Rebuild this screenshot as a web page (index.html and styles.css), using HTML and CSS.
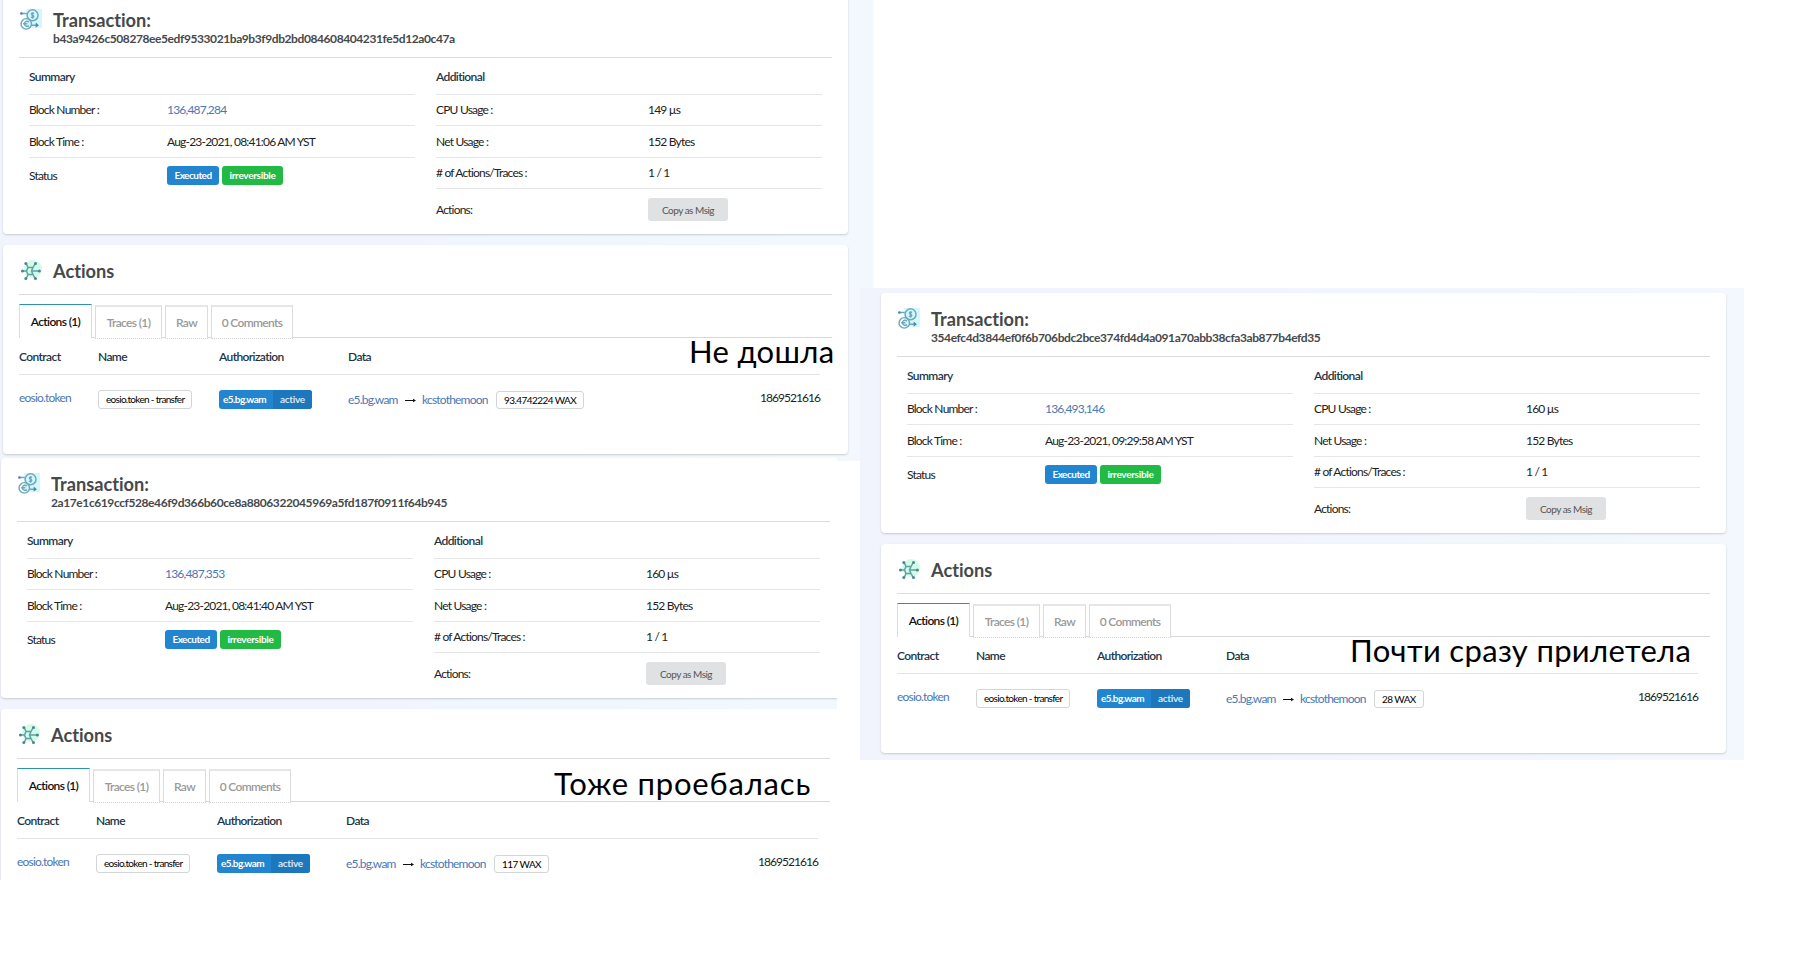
FILE: index.html
```
<!DOCTYPE html>
<html>
<head>
    <meta charset="utf-8">
    <title>Transactions</title>
    <link rel="stylesheet" href="styles.css">
</head>
<body>
    <svg class="defs">
      <symbol id="icon-transaction" viewBox="0 0 21 21">
        <rect x="6" y="0" width="15" height="18" fill="#d3f7fa"/>
        <g fill="none" stroke="#6fa8bd" stroke-width="1.4">
          <circle cx="12" cy="6" r="5.2"/>
          <circle cx="6" cy="14.2" r="5"/>
          <path d="M1 4.3h5.500M11 15.500h5.500M13.500 4.200c-2.600-1-3.400 1-1.500 1.800s1.200 2.800-1.600 1.700M12 3v6.200M8.500 12.200c-3-1.500-4.600.6-4.300 2.300s2.500 2.700 4.300 1.300M3 14h4"/>
        </g>
        <circle cx="1.300" cy="4.300" r="1.300" fill="#4d88a5"/>
        <path d="M15 13l3 2.500-3 2.500z" fill="#4d88a5"/>
      </symbol>
      <symbol id="icon-actions" viewBox="0 0 22 22">
        <circle cx="13" cy="9" r="9" fill="#d2fbe6"/>
        <g fill="none" stroke="#5f9fa6" stroke-width="1.500">
          <path d="M8 7.500h5M13 14.500H8L6.500 11 8 7.500M13 7.500l-1.500 3.500 1.500 3.500M1.500 11h5M11.500 11h9M8 7.500L6 3M13 7.500L15.500 3M8 14.500L6 19M13 14.500l2.500 4.500"/>
        </g>
        <g fill="#4a8698">
          <circle cx="2.500" cy="11" r="1.500"/><circle cx="19.300" cy="11" r="1.500"/>
          <circle cx="5.800" cy="3.500" r="1.500"/><circle cx="15.500" cy="3.500" r="1.500"/>
          <circle cx="5.800" cy="18.500" r="1.500"/><circle cx="15.500" cy="18.500" r="1.500"/>
        </g>
      </symbol>
      <symbol id="icon-arrow" viewBox="0 0 11 7">
        <path d="M0 3.500h9" stroke="#111" stroke-width="1"/>
        <path d="M8 1.800L11 3.500 8 5.200z" fill="#111"/>
      </symbol>
    </svg>

    <div class="shot shot-first">
      <div class="card transaction">
        <div class="card-header">
          <svg class="icon"><use href="#icon-transaction"/></svg>
          <div>
            <h3>Transaction:</h3>
            <div class="hash">b43a9426c508278ee5edf9533021ba9b3f9db2bd084608404231fe5d12a0c47a</div>
          </div>
        </div>
        <div class="details">
          <div class="summary">
            <div class="row head">Summary</div>
            <div class="row"><span>Block Number :</span><a>136,487,284</a></div>
            <div class="row tall"><span>Block Time :</span><span>Aug-23-2021, 08:41:06 AM YST</span></div>
            <div class="row status"><span>Status</span><div class="labels"><b class="label blue">Executed</b><b class="label green">irreversible</b></div></div>
          </div>
          <div class="additional">
            <div class="row head">Additional</div>
            <div class="row"><span>CPU Usage :</span><span>149 µs</span></div>
            <div class="row tall"><span>Net Usage :</span><span>152 Bytes</span></div>
            <div class="row"><span># of Actions/Traces :</span><span>1 / 1</span></div>
            <div class="row last"><span>Actions:</span><button>Copy as Msig</button></div>
          </div>
        </div>
      </div>
      <div class="card actions">
        <div class="card-header">
          <svg class="icon"><use href="#icon-actions"/></svg>
          <h3>Actions</h3>
        </div>
        <div class="tabs">
          <div class="tab active">Actions (1)</div>
          <div class="tab traces">Traces (1)</div>
          <div class="tab raw">Raw</div>
          <div class="tab comments">0 Comments</div>
        </div>
        <div class="grid grid-head"><span>Contract</span><span>Name</span><span>Authorization</span><span>Data</span></div>
        <div class="grid grid-row">
          <a>eosio.token</a>
          <div><span class="name">eosio.token - transfer</span></div>
          <div class="auth"><b>e5.bg.wam</b><b class="perm">active</b></div>
          <div class="data"><a class="from">e5.bg.wam</a><svg class="arrow"><use href="#icon-arrow"/></svg><a class="to">kcstothemoon</a><span class="amount">93.4742224 WAX</span></div>
          <span class="memo">1869521616</span>
        </div>
      </div>
      <div class="note">Не дошла</div>
    </div>

    <div class="shot shot-second">
      <div class="card transaction">
        <div class="card-header">
          <svg class="icon"><use href="#icon-transaction"/></svg>
          <div>
            <h3>Transaction:</h3>
            <div class="hash">2a17e1c619ccf528e46f9d366b60ce8a8806322045969a5fd187f0911f64b945</div>
          </div>
        </div>
        <div class="details">
          <div class="summary">
            <div class="row head">Summary</div>
            <div class="row"><span>Block Number :</span><a>136,487,353</a></div>
            <div class="row tall"><span>Block Time :</span><span>Aug-23-2021, 08:41:40 AM YST</span></div>
            <div class="row status"><span>Status</span><div class="labels"><b class="label blue">Executed</b><b class="label green">irreversible</b></div></div>
          </div>
          <div class="additional">
            <div class="row head">Additional</div>
            <div class="row"><span>CPU Usage :</span><span>160 µs</span></div>
            <div class="row tall"><span>Net Usage :</span><span>152 Bytes</span></div>
            <div class="row"><span># of Actions/Traces :</span><span>1 / 1</span></div>
            <div class="row last"><span>Actions:</span><button>Copy as Msig</button></div>
          </div>
        </div>
      </div>
      <div class="card actions">
        <div class="card-header">
          <svg class="icon"><use href="#icon-actions"/></svg>
          <h3>Actions</h3>
        </div>
        <div class="tabs">
          <div class="tab active">Actions (1)</div>
          <div class="tab traces">Traces (1)</div>
          <div class="tab raw">Raw</div>
          <div class="tab comments">0 Comments</div>
        </div>
        <div class="grid grid-head"><span>Contract</span><span>Name</span><span>Authorization</span><span>Data</span></div>
        <div class="grid grid-row">
          <a>eosio.token</a>
          <div><span class="name">eosio.token - transfer</span></div>
          <div class="auth"><b>e5.bg.wam</b><b class="perm">active</b></div>
          <div class="data"><a class="from">e5.bg.wam</a><svg class="arrow"><use href="#icon-arrow"/></svg><a class="to">kcstothemoon</a><span class="amount">117 WAX</span></div>
          <span class="memo">1869521616</span>
        </div>
      </div>
      <div class="note">Тоже проебалась</div>
    </div>

    <div class="shot shot-third">
      <div class="card transaction">
        <div class="card-header">
          <svg class="icon"><use href="#icon-transaction"/></svg>
          <div>
            <h3>Transaction:</h3>
            <div class="hash">354efc4d3844ef0f6b706bdc2bce374fd4d4a091a70abb38cfa3ab877b4efd35</div>
          </div>
        </div>
        <div class="details">
          <div class="summary">
            <div class="row head">Summary</div>
            <div class="row"><span>Block Number :</span><a>136,493,146</a></div>
            <div class="row tall"><span>Block Time :</span><span>Aug-23-2021, 09:29:58 AM YST</span></div>
            <div class="row status"><span>Status</span><div class="labels"><b class="label blue">Executed</b><b class="label green">irreversible</b></div></div>
          </div>
          <div class="additional">
            <div class="row head">Additional</div>
            <div class="row"><span>CPU Usage :</span><span>160 µs</span></div>
            <div class="row tall"><span>Net Usage :</span><span>152 Bytes</span></div>
            <div class="row"><span># of Actions/Traces :</span><span>1 / 1</span></div>
            <div class="row last"><span>Actions:</span><button>Copy as Msig</button></div>
          </div>
        </div>
      </div>
      <div class="card actions">
        <div class="card-header">
          <svg class="icon"><use href="#icon-actions"/></svg>
          <h3>Actions</h3>
        </div>
        <div class="tabs">
          <div class="tab active">Actions (1)</div>
          <div class="tab traces">Traces (1)</div>
          <div class="tab raw">Raw</div>
          <div class="tab comments">0 Comments</div>
        </div>
        <div class="grid grid-head"><span>Contract</span><span>Name</span><span>Authorization</span><span>Data</span></div>
        <div class="grid grid-row">
          <a>eosio.token</a>
          <div><span class="name">eosio.token - transfer</span></div>
          <div class="auth"><b>e5.bg.wam</b><b class="perm">active</b></div>
          <div class="data"><a class="from">e5.bg.wam</a><svg class="arrow"><use href="#icon-arrow"/></svg><a class="to">kcstothemoon</a><span class="amount">28 WAX</span></div>
          <span class="memo">1869521616</span>
        </div>
      </div>
      <div class="note">Почти сразу прилетела</div>
    </div>
</body>
</html>
```
FILE: styles.css
```
* {
  box-sizing: border-box;
}

body {
  margin: 0;
  height: 964px;
  position: relative;
  overflow: hidden;
  background: #fff;
  font-family: Lato, "Liberation Sans", sans-serif;
  font-size: 12px;
  letter-spacing: -0.8px;
  color: #222;
  white-space: nowrap;
}

.defs {
  position: absolute;
  width: 0;
  height: 0;
}

/* three captures on one sheet */
.shot {
  position: absolute;
  overflow: hidden;
  background: linear-gradient(90deg, #f1f4fd 40%, #f2f8fd 90%);
}

.shot-first {
  left: 0;
  top: 0;
  width: 873px;
  height: 461px;
  padding-left: 3px;
}

.shot-first .transaction {
  margin-top: -6px;
}

.shot-second {
  left: 0;
  top: 458px;
  width: 837px;
  height: 422px;
  padding-left: 1px;
}

.shot-third {
  left: 860px;
  top: 288px;
  width: 884px;
  height: 472px;
  padding: 5px 0 0 21px;
}

.card {
  width: 845px;
  padding: 0 16px;
  background: #fff;
  border-radius: 4px;
  box-shadow: 0 1px 2px 0 rgba(34, 36, 38, .2);
}

.transaction {
  height: 240px;
  margin-bottom: 11px;
}

.actions {
  height: 209px;
}

.card-header {
  display: flex;
  padding: 14px 0 0 1px;
  border-bottom: 1px solid #dadbdc;
}

.transaction .card-header {
  height: 64px;
}

.actions .card-header {
  height: 50px;
}

.icon {
  width: 22px;
  height: 22px;
  margin: 1px 11px 0 0;
}

h3 {
  margin: 0;
  font-size: 18.2px;
  font-weight: 700;
  line-height: 24px;
  letter-spacing: 0;
  font-variant-ligatures: none;
  color: #46494c;
}

.hash {
  margin-top: -1px;
  font-weight: 700;
  line-height: 15px;
  letter-spacing: -0.41px;
  color: #46494c;
}

a {
  color: #4a78b4;
}

.details {
  display: flex;
  justify-content: space-between;
  padding: 0 10px;
}

.summary, .additional {
  width: 386px;
}

.row {
  display: flex;
  align-items: center;
  height: 31px;
  padding-bottom: 1px;
  border-bottom: 1px solid #e5e6e8;
}

.row > span:first-child {
  width: 138px;
}

.additional .row > span:first-child {
  width: 212px;
}

.row.head {
  height: 37px;
  padding: 1px 0 0;
}

.row.tall {
  height: 32px;
  padding: 0;
}

.row.status {
  height: 36px;
  border: 0;
}

.row.last {
  height: 42px;
  border: 0;
}

.head, .grid-head {
  font-weight: 600;
  letter-spacing: -0.6px;
  color: #1b3547;
}

.labels {
  display: flex;
  gap: 3px;
}

.label {
  height: 19px;
  width: 52px;
  text-align: center;
  font-size: 10px;
  line-height: 19px;
  letter-spacing: -0.5px;
  color: #fff;
  border-radius: 3px;
}

.blue {
  background: #2185d0;
}

.green {
  width: 61px;
  letter-spacing: -0.3px;
  background: #21ba45;
}

button {
  width: 80px;
  height: 23px;
  padding: 0;
  border: 0;
  border-radius: 3px;
  background: #e0e1e2;
  font: 10px Lato, sans-serif;
  letter-spacing: -0.5px;
  color: #555;
}

.tabs {
  display: flex;
  gap: 3px;
  height: 43px;
  padding-top: 10px;
  border-bottom: 1px solid #d7d8da;
}

.tab {
  height: 34px;
  border: 1px solid #dcdcdc;
  border-top: 2px solid #e6e6e6;
  border-bottom: 1px dotted #d4d4d4;
  background: #fff;
  text-align: center;
  font-weight: 600;
  line-height: 31px;
  letter-spacing: -0.65px;
  color: #999;
}

.tab.active {
  width: 73px;
  margin-top: -1px;
  border-top: 1px solid #2e93a8;
  border-bottom: 0;
  line-height: 33px;
  color: #111;
}

.traces {
  width: 67px;
}

.raw {
  width: 43px;
}

.comments {
  width: 82px;
}

.grid {
  display: grid;
  grid-template-columns: 79px 121px 129px 1fr auto;
  margin-right: 12px;
}

.grid-head {
  height: 37px;
  line-height: 38px;
  border-bottom: 1px solid #e3e4e6;
}

.grid-row {
  padding-top: 15px;
  line-height: 15px;
}

.name, .amount {
  display: inline-block;
  height: 19px;
  padding: 0 7px;
  border: 1px solid #d4d5d6;
  border-radius: 3px;
  font-size: 10px;
  line-height: 17px;
  letter-spacing: -0.7px;
  color: #000;
}

.name {
  width: 94px;
}

.auth {
  display: flex;
  width: 93px;
  height: 19px;
  border-radius: 3px;
  overflow: hidden;
  background: #2185d0;
  color: #fff;
  font-size: 10px;
  line-height: 19px;
  letter-spacing: -0.55px;
}

.auth b {
  width: 54px;
  padding-left: 4px;
}

.auth .perm {
  width: 39px;
  padding-left: 7px;
  background: #1d77bd;
  letter-spacing: -0.3px;
  color: #d6e6f3;
}

.data {
  display: flex;
  align-items: center;
  height: 19px;
}

.from {
  width: 57px;
}

.arrow {
  width: 11px;
  height: 7px;
  margin: 2px 6px 0 0;
}

.to {
  width: 74px;
}

.amount {
  height: 18px;
  margin-top: 1px;
  line-height: 17px;
  letter-spacing: -0.57px;
}

.memo {
  letter-spacing: -0.96px;
}

/* captions written over the captures */
.note {
  position: absolute;
  font-size: 31px;
  line-height: 40px;
  letter-spacing: 0;
  color: #000;
}

.shot-first .note {
  left: 689px;
  top: 331px;
  letter-spacing: 0.3px;
}

.shot-second .note {
  left: 554px;
  top: 305px;
  letter-spacing: 0.8px;
}

.shot-third .note {
  left: 490px;
  top: 342px;
  letter-spacing: 0.34px;
}
```
